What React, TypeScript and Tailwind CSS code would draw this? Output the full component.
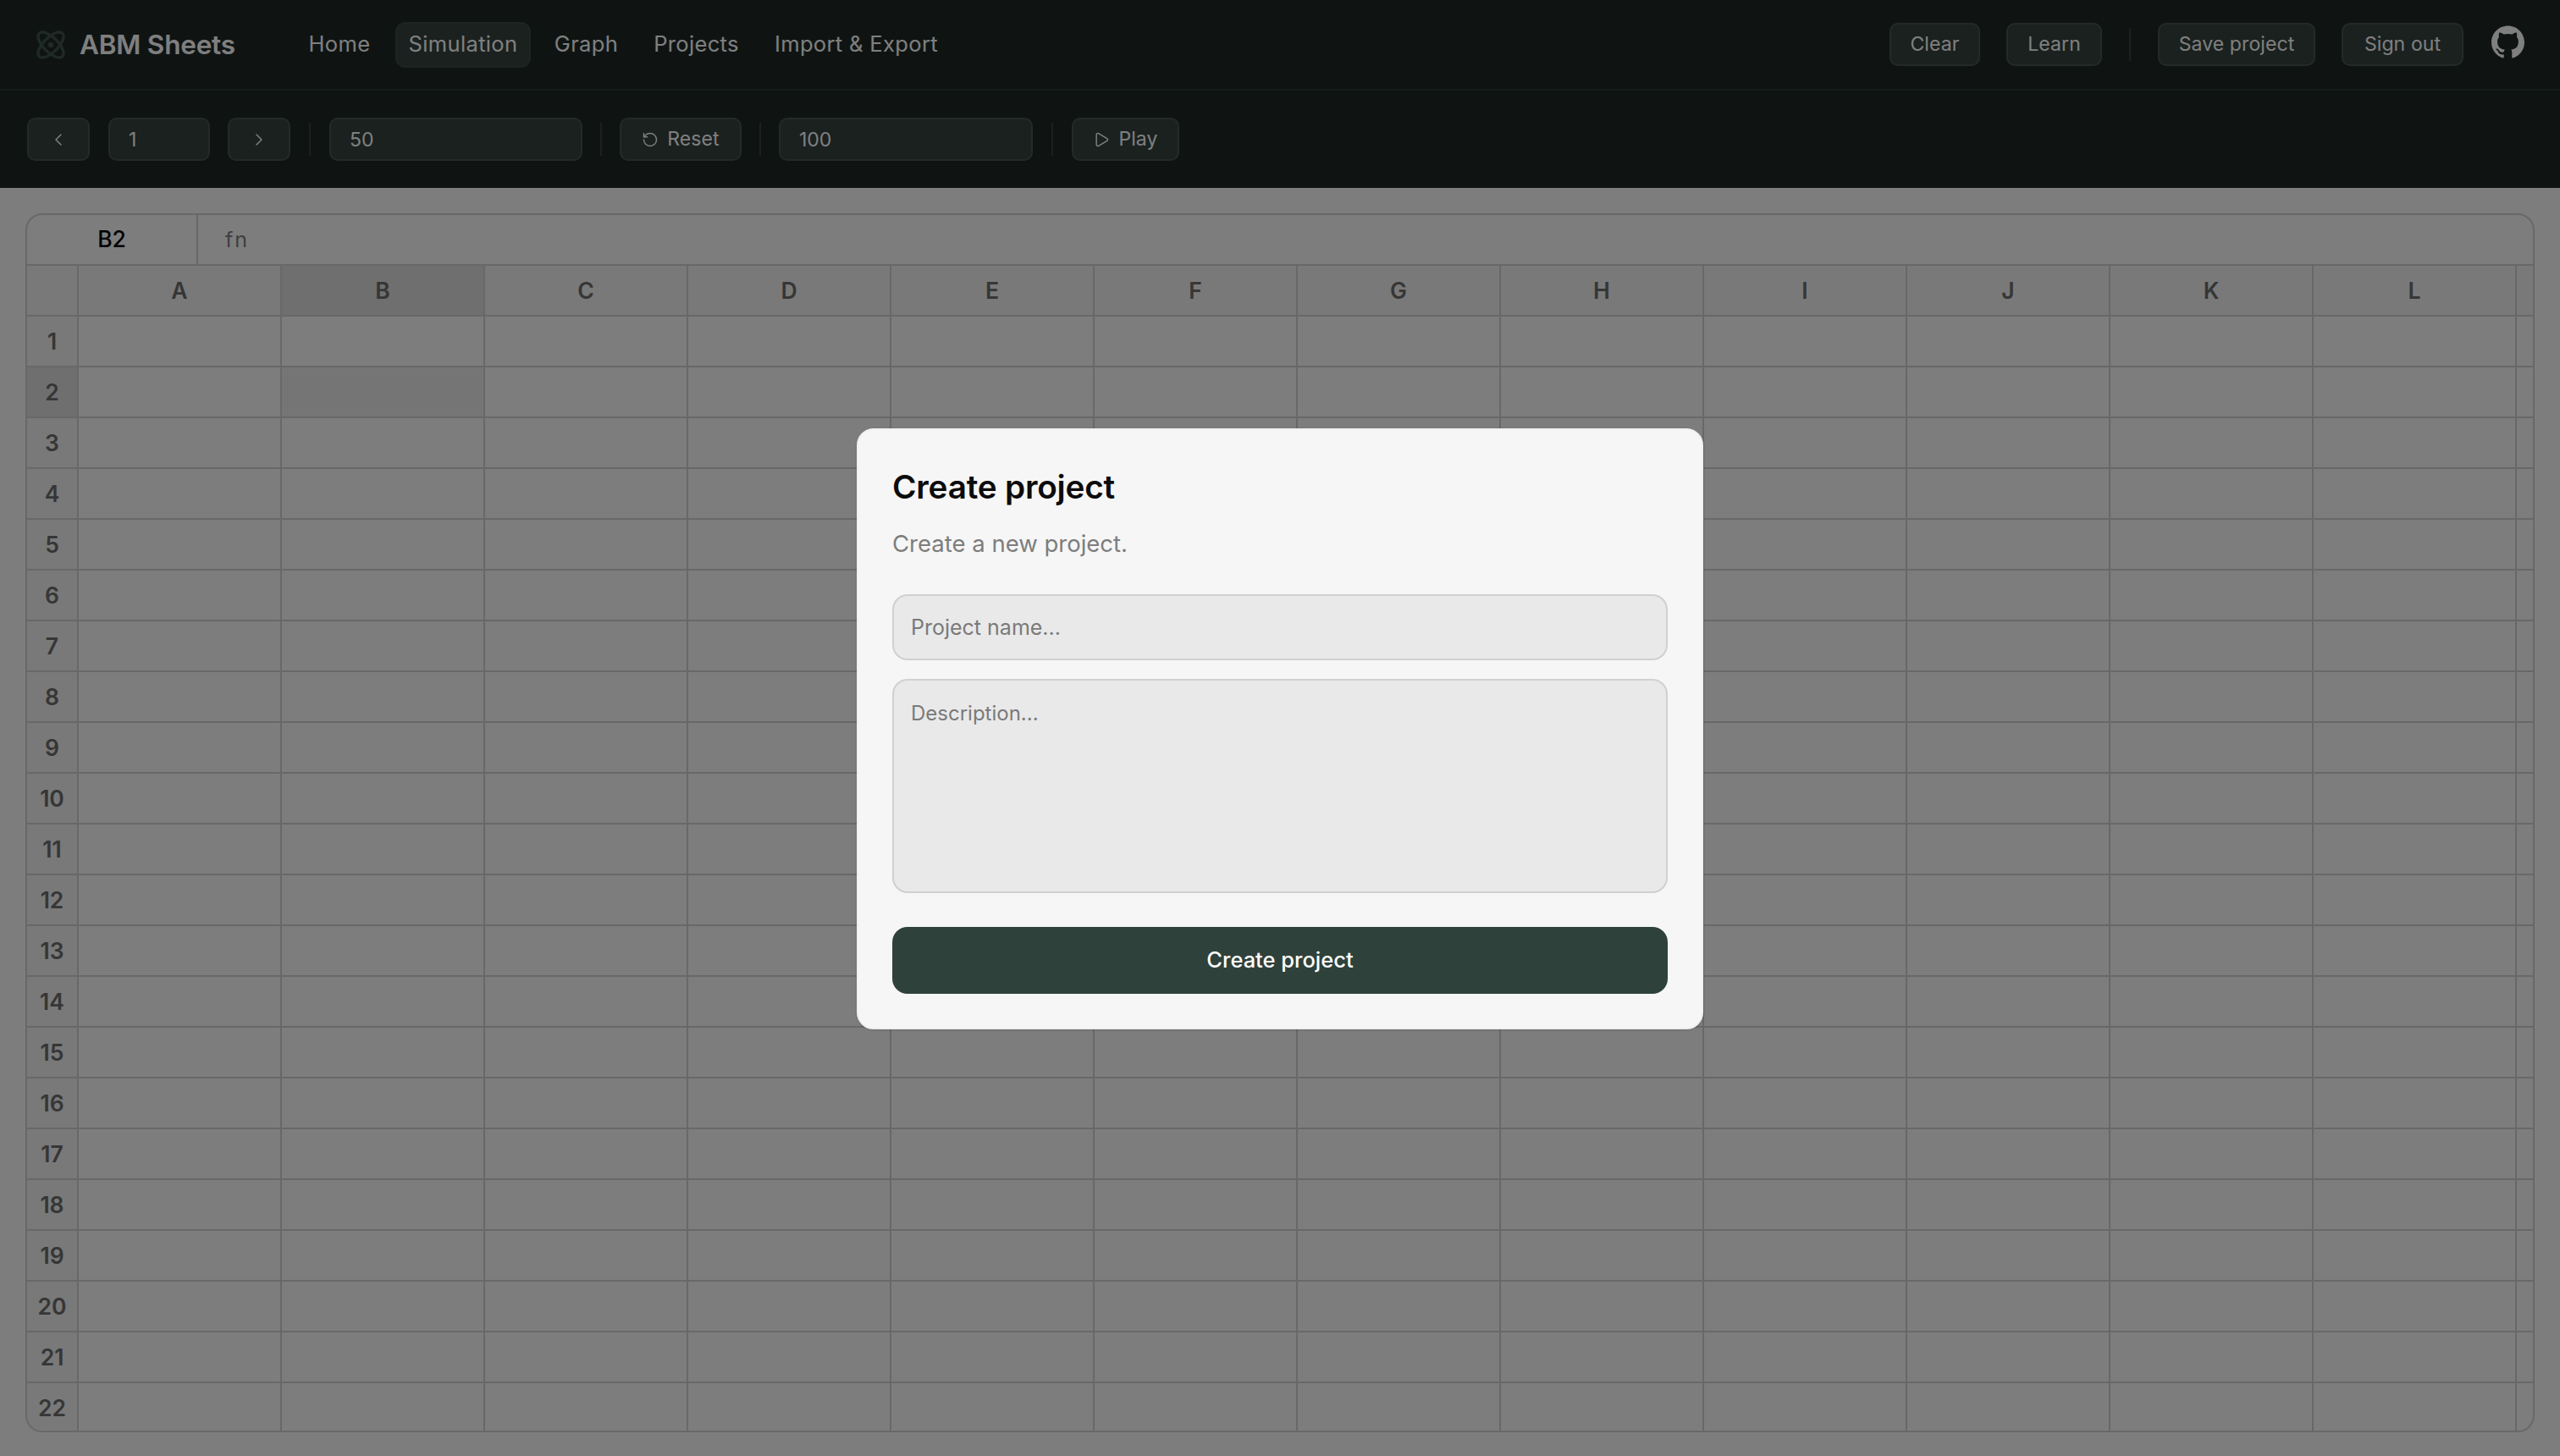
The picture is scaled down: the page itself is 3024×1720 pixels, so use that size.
import { Atom, ChevronLeft, ChevronRight, Play, RotateCcw } from "lucide-react";
import { SiGithub } from "react-icons/si";

const columns = ["A", "B", "C", "D", "E", "F", "G", "H", "I", "J", "K", "L", ""];
const rows = Array.from({ length: 22 }, (_, i) => i + 1);

const nav = [
  { label: "Home", width: "w-[106px]", active: false },
  { label: "Simulation", width: "w-[160px]", active: true },
  { label: "Graph", width: "w-[105px]", active: false },
  { label: "Projects", width: "w-[129px]", active: false },
  { label: "Import & Export", width: "w-[223px]", active: false },
];

const btn =
  "flex h-[51px] items-center justify-center rounded-[10px] border-2 border-[#46544f] bg-[#34423f] text-[23px] tracking-[0.1px] text-white/100";

function Sep({ className }: { className: string }) {
  return <div className={`w-[2px] bg-[#34423f] ${className}`} />;
}

function ToolInput({ value, width }: { value: string; width: string }) {
  return (
    <input
      readOnly
      value={value}
      className={`h-[51px] ${width} rounded-[10px] border-2 border-[#46544f] bg-[#34423f] pl-[22px] text-[23px] text-white outline-none`}
    />
  );
}

export default function App() {
  return (
    <div className="relative h-[1720px] w-[3024px] overflow-hidden bg-[#fafafa] font-['Inter',sans-serif]">
      <header className="flex h-[107px] items-center border-b-2 border-[#2c3935] bg-[#1e2927] pr-[42px] pl-[40px]">
        <Atom size={40} strokeWidth={2} className="mr-[14px] text-[#3e544d]" />
        <span className="w-[192px] text-[31.5px] font-semibold tracking-[-0.2px] text-white">ABM Sheets</span>
        <nav className="ml-[62px] flex items-center gap-[13px]">
          {nav.map((n) => (
            <a
              key={n.label}
              className={`flex h-[54px] ${n.width} items-center justify-center rounded-[12px] border-2 text-[25.5px] tracking-[0.35px] ${
                n.active ? "border-[#3a4945] bg-[#34423f] text-white" : "border-transparent text-white"
              }`}
            >
              {n.label}
            </a>
          ))}
        </nav>
        <div className="ml-auto flex items-center">
          <button className={`${btn} w-[107px]`}>Clear</button>
          <button className={`${btn} ml-[31px] w-[113px]`}>Learn</button>
          <Sep className="mx-[32px] h-[39px]" />
          <button className={`${btn} w-[186px]`}>Save project</button>
          <button className={`${btn} ml-[31px] w-[144px]`}>Sign out</button>
          <SiGithub size={39} className="mb-[6px] ml-[33px] text-white" />
        </div>
      </header>

      <div className="flex h-[115px] items-center bg-[#1e2927] pl-[32px]">
        <button className={`${btn} w-[74px]`}>
          <ChevronLeft size={24} strokeWidth={1.5} />
        </button>
        <div className="ml-[22px]">
          <ToolInput value="1" width="w-[120px]" />
        </div>
        <button className={`${btn} ml-[21px] w-[74px]`}>
          <ChevronRight size={24} strokeWidth={1.5} />
        </button>
        <Sep className="mx-[22px] h-[39px]" />
        <ToolInput value="50" width="w-[299px]" />
        <Sep className="mr-[21px] ml-[21px] h-[39px]" />
        <button className={`${btn} w-[144px] gap-[10px]`}>
          <RotateCcw size={20} strokeWidth={1.75} />
          Reset
        </button>
        <Sep className="mr-[21px] ml-[21px] h-[39px]" />
        <ToolInput value="100" width="w-[300px]" />
        <Sep className="mx-[22px] h-[39px]" />
        <button className={`${btn} w-[127px] gap-[10px]`}>
          <Play size={20} strokeWidth={1.75} />
          Play
        </button>
      </div>

      <main className="px-[30px] pt-[30px]">
        <div className="h-[1440px] overflow-hidden rounded-[20px] border-2 border-[#d0d0d0]">
          <div className="flex h-[60px] items-center border-b-2 border-[#d0d0d0]">
            <div className="flex h-full w-[202px] items-center justify-center border-r-2 border-[#d0d0d0] text-[26.5px] font-medium text-black">
              B2
            </div>
            <div className="pt-[2px] pl-[32px] text-[25px] tracking-[2px] text-[#808080]">fn</div>
          </div>
          <div className="grid grid-cols-[61px_repeat(13,240px)] text-[26.5px] font-semibold text-[#6c6c6c]">
            <div className="h-[60px] border-r-2 border-b-2 border-[#d0d0d0] bg-[#f2f2f2]" />
            {columns.map((c, i) => (
              <div
                key={i}
                className={`flex h-[60px] items-center justify-center border-r-2 border-b-2 border-[#d0d0d0] pt-[2px] ${
                  c === "B" ? "bg-[#dedede]" : "bg-[#f2f2f2]"
                }`}
              >
                {c}
              </div>
            ))}
            {rows.map((r) => (
              <div key={r} className="contents">
                <div
                  className={`flex h-[60px] items-center justify-center border-r-2 border-b-2 border-[#d0d0d0] pt-[2px] ${
                    r === 2 ? "bg-[#dedede]" : "bg-[#f2f2f2]"
                  }`}
                >
                  {r}
                </div>
                {columns.map((c, i) => (
                  <div
                    key={i}
                    className={`h-[60px] border-r-2 border-b-2 border-[#d0d0d0] ${
                      r === 2 && c === "B" ? "bg-[#eaeaea]" : ""
                    }`}
                  />
                ))}
              </div>
            ))}
          </div>
        </div>
      </main>

      <div className="absolute inset-0 flex items-center justify-center bg-black/50 pt-[2px]">
        <div className="w-[1000px] rounded-[20px] border-2 border-[#f0f0f0] bg-[#f6f6f6] p-[40px] shadow-sm">
          <h2 className="text-[38.7px] leading-[54px] font-semibold tracking-[-0.2px] text-[#0c0c0c]">Create project</h2>
          <p className="mt-[18px] text-[27.5px] leading-[44px] text-[#7d7d7d]">Create a new project.</p>
          <input
            placeholder="Project name..."
            className="mt-[38px] block h-[78px] w-full rounded-[18px] border-2 border-[#d0d0d0] bg-[#e9e9e9] px-[20px] text-[25px] text-[#111] outline-none placeholder:text-[#7a7a7a]"
          />
          <textarea
            placeholder="Description..."
            className="mt-[22px] block h-[253px] w-full resize-none rounded-[18px] border-2 border-[#d0d0d0] bg-[#e9e9e9] px-[20px] py-[20px] text-[24px] leading-[38px] text-[#111] outline-none placeholder:text-[#7a7a7a]"
          />
          <button className="mt-[40px] flex h-[79px] w-full items-center justify-center rounded-[18px] bg-[#2f413b] text-[25.5px] font-medium text-white">
            Create project
          </button>
        </div>
      </div>
    </div>
  );
}
